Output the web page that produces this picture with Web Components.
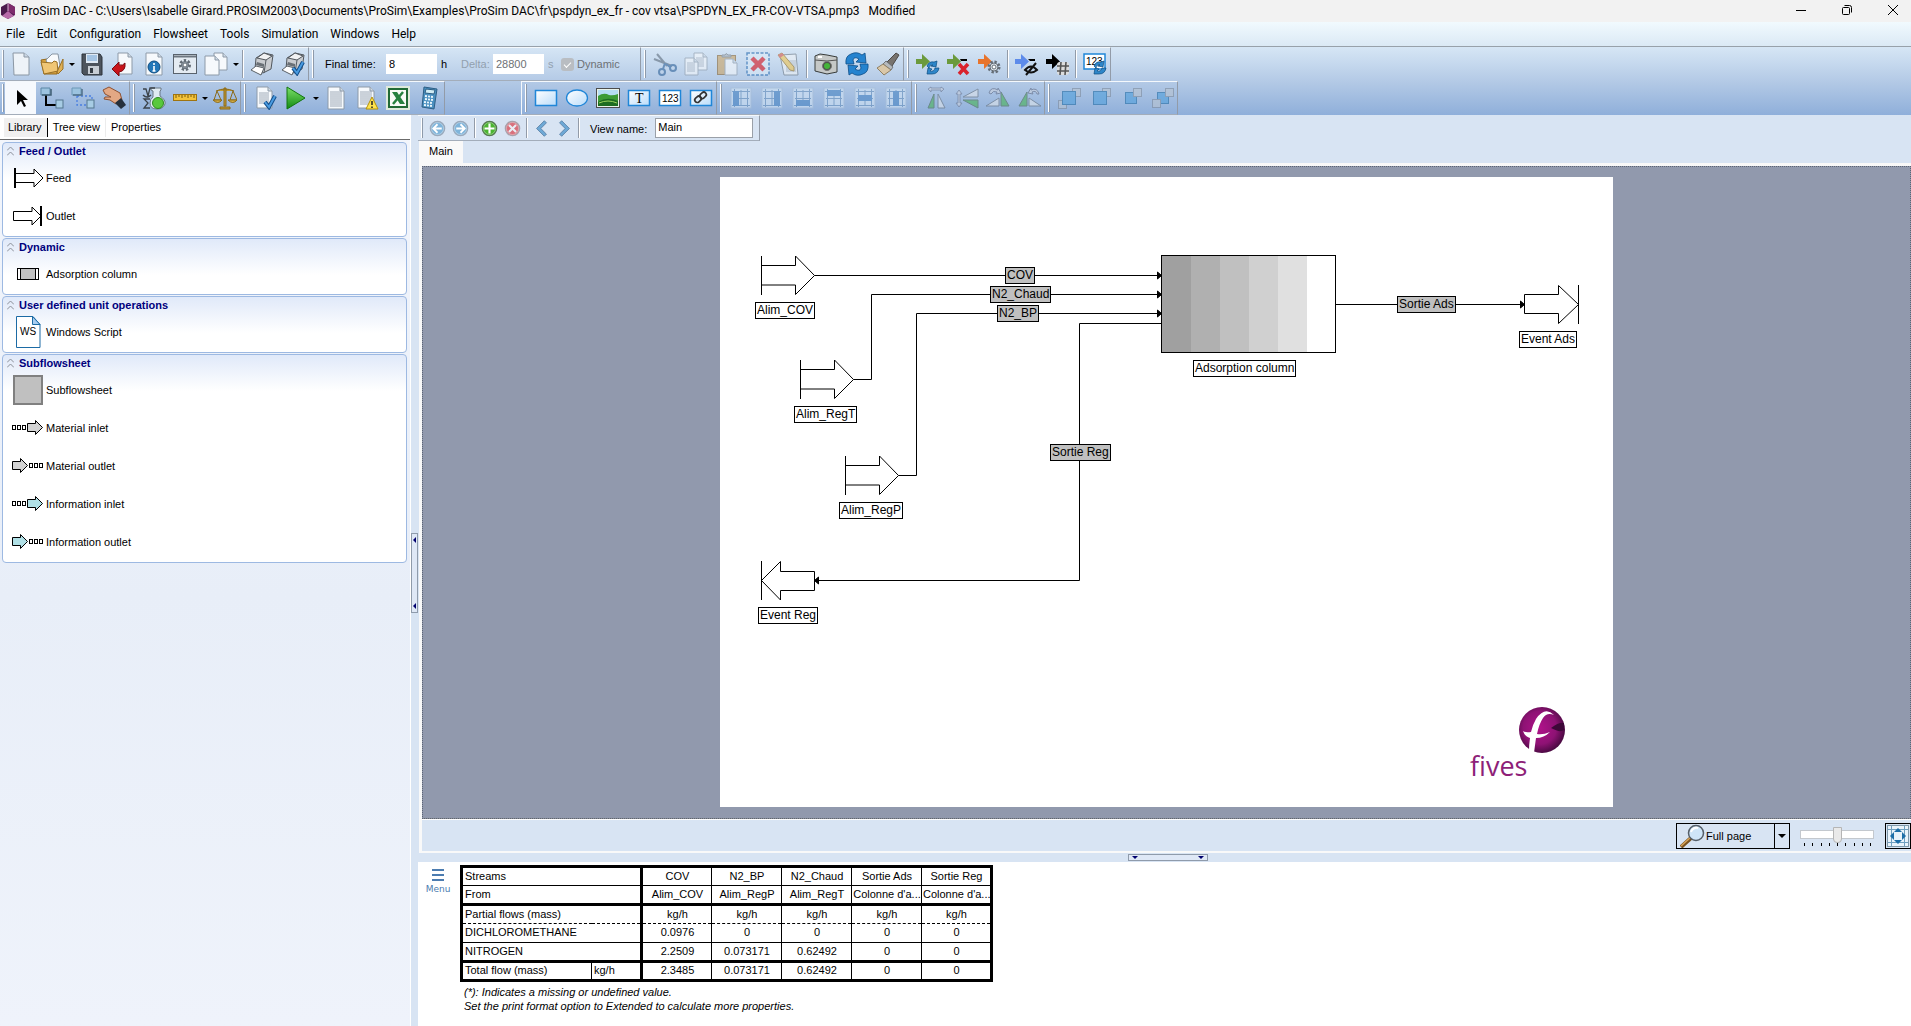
<!DOCTYPE html>
<html lang="en">
<head>
<meta charset="utf-8">
<title>ProSim DAC</title>
<style>
  html, body {
    margin: 0;
    height: 100%;
  }

  body {
    font: 11px/14px "Liberation Sans", Arial, sans-serif;
    color: #000;
    background: #d8e4f3;
    overflow: hidden;
  }
</style>
</head>
<body>
<prosim-app></prosim-app>

<script>
// all toolbar icons, drawn on a 24x24 grid
const page = (x, y, w, h) => `<path d="M${x} ${y}h${w - 4}l4 4v${h - 4}h-${w}z" fill="#f6f9fc" stroke="#8d9aa8"/><path d="M${x + w - 4} ${y}v4h4" fill="#cfdae5" stroke="#8d9aa8"/>`
const lines = (x, y, w, n) => Array.from({length: n}, (_, i) => `<path d="M${x} ${y + i * 2}h${w}" stroke="#8b98a6" stroke-width=".8"/>`).join('')
const tick = `<path d="M12 16l4 5 6-11" fill="none" stroke="#134f8b" stroke-width="4"/><path d="M12 16l4 5 6-11" fill="none" stroke="#4a9be0" stroke-width="2"/>`
const refresh = `<g fill="#2e86c9" stroke="#0c4c80" stroke-width=".7"><path d="M11 14q2-5 7-4l3-1-1 6-5-1 2-1q-3-1-4 3z"/><path d="M23 16q-1 6-7 6h-5l1-6 4 1-2 2q4 1 5-3z"/></g>`
const refreshBig = `<g fill="#2583cf" stroke="#0d4d86" stroke-width=".8"><path d="M1 12Q0 4 6 2q6-3 11 1l3-2 1 10-10-1 3-3q-5-3-6 1l1 4z"/><path d="M23 12q1 8-5 10-6 3-11-1l-3 2-1-10 10 1-3 3q5 3 6-1l-1-4z"/></g>`
const arrow = (c) => `<path d="M0 7h6V2l8 7.500-8 7.500v-5H0z" fill="${c}"/>`
const printer = `<path d="M6 6l8-5 9 2-2 14-8 4-8-4z" fill="#c9ccd0" stroke="#50565c"/><path d="M7 6l9 2 6-4-8-3z" fill="#f1f2f3" stroke="#50565c"/><path d="M16 8l-2 13" stroke="#555b61"/><path d="M7 10l7 2v3l-8-2z" fill="#6a7076"/><path d="M1 18l5-4 8 2-3 7z" fill="#fff" stroke="#5a6066"/>`
const alignIcon = (x, y, w, h) => `<rect x="2" y="2" width="20" height="20" fill="#d5e6f6" stroke="#a9bfd8"/><path d="M3 5.500h18M3 19.500h18M5.500 3v18M18.500 3v18M4 12.500h16M12 4v16" stroke="#6b93bd" fill="none"/><rect x="${x}" y="${y}" width="${w}" height="${h}" fill="#4a86c4"/>`
const square = (x, y, s, c) => `<rect x="${x}" y="${y}" width="${s}" height="${s}" fill="${c}" stroke="${c === '#b8c3d0' ? '#7f8b9b' : '#1f6ba4'}"/>`
const glass = '#b8c3d0', blue = '#4f9fdc'
const disc = (c, edge, inner) => `<circle cx="12" cy="12" r="10" fill="${c}" stroke="${edge}" stroke-width="2"/><circle cx="12" cy="12" r="8.500" fill="none" stroke="#ffffff77"/>${inner}`
const gear = (cx, cy, r, c) => `<circle cx="${cx}" cy="${cy}" r="${r}" fill="none" stroke="#646d76" stroke-width="3" stroke-dasharray="2.200 1.700"/><circle cx="${cx}" cy="${cy}" r="${r - 1}" fill="${c}" stroke="#646d76"/><circle cx="${cx}" cy="${cy}" r="2" fill="#fff" stroke="#646d76"/>`
const frame = `<defs><linearGradient id="f" x2="1" y2="1"><stop stop-color="#fff"/><stop offset="1" stop-color="#b9dcfa"/></linearGradient></defs><rect x="1.500" y="4.500" width="21" height="15" fill="url(#f)" stroke="#1f86d8" stroke-width="1.500"/>`

const icons = {
  new: `<path d="M4 1h11l5 4v18H5z" fill="#eef3f8" stroke="#8b97a4"/><path d="M15 1v4h5" fill="#cbd7e4" stroke="#8b97a4"/>`,
  open: `<path d="M1 8l6-1 1 2h9v13H4z" fill="#d9a441" stroke="#94691c"/><path d="M6 8l6-6h6l2 12-9 7z" fill="#f8fafc" stroke="#8895a3"/><path d="M4 22L1 10l11 1 2-2 3 1 1 9z" fill="#f0c675" stroke="#9a7025"/><path d="M17 20l6-13v10l-5 5z" fill="#e0b055" stroke="#9a7025"/>`,
  save: `<path d="M2 2h18l2 3v18H4l-2-2z" fill="#4d545d" stroke="#2d333a"/><path d="M6 2h12v9H6z" fill="#dfe9f4"/><path d="M7 4h10M7 6h10M7 8h10" stroke="#6ba0d4"/><path d="M8 14h11v8H8z" fill="#c8ced5"/><path d="M10 16h3v5h-3z" fill="#343b43"/>`,
  exit: `${page(7, 1, 14, 21)}<path d="M1 17l7-7v3q4 1 6-2 1 8-6 9v4z" fill="#c8141b" stroke="#7c0a10"/>`,
  info: `${page(4, 1, 16, 22)}<circle cx="12" cy="15" r="6" fill="#2377b8" stroke="#0f4c80"/><path d="M12 11v2M12 14v5M10.500 19h3" stroke="#fff" stroke-width="1.600"/>`,
  options: `<rect x=".5" y="2.500" width="23" height="19" fill="#e4ebf2" stroke="#59626c"/><path d="M1 4.500h22" stroke="#6d7680" stroke-width="2"/>${gear(12, 13, 4.5, '#9da8b4')}`,
  copies: `${page(10, 1, 13, 17)}${page(1, 4, 14, 19)}`,
  print: printer,
  printcheck: `${printer}${tick}`,
  pointer: `<path d="M8 4v15l4-4 3 6 2-1-3-6h5z"/>`,
  link: `<path d="M1 2h9v7H1z" fill="#9cc3df" stroke="#5b86a5"/><path d="M6 9v10h11" fill="none" stroke="#000" stroke-width="2"/><path d="M11 3v6H2" fill="none" stroke="#3f5d73" stroke-width="1.500"/><rect x="16" y="14" width="7" height="8" fill="#a7cce4" stroke="#54778f"/>`,
  linkdot: `<path d="M1 2h9v7H1z" fill="#9cc3df" stroke="#6d98b7"/><path d="M6 10v9h11M6 10h15v4" fill="none" stroke="#4a7fe0" stroke-width="1.300" stroke-dasharray="2 2"/><path d="M11 3v6H2" fill="none" stroke="#4f6f88" stroke-width="1.500"/><rect x="16" y="14" width="7" height="8" fill="#a7cce4" stroke="#54778f"/>`,
  hand: `<path d="M1 4l6-3 11 6 2 7-6 4-6-4-6-1 1-2 6 0-6-3z" fill="#e3a884" stroke="#8e5132"/><path d="M13 17l6-5 5 7-5 4z" fill="#26303c"/>`,
  thermo: `<path d="M9 2h10v2l-1 1v5q6 4 5 8-2 5-8 5-7 0-7-6 0-4 3-6V5L9 4z" fill="#dfeaf2" stroke="#6b7985"/><circle cx="16" cy="17" r="5.500" fill="#59c83d" stroke="#2d8a1e"/><path d="M1 3h3l2 7 2-8h5M1 9q4 4 8 0M8 13H2l4 4-4 5h6" fill="none" stroke="#3b434b" stroke-width="1.300"/>`,
  ruler: `<rect x=".5" y="8.500" width="23" height="6" fill="#f3c33a" stroke="#9f7410"/><path d="M3 9v3M6 9v2M9 9v3M12 9v2M15 9v3M18 9v2M21 9v3" stroke="#7b5a0b"/>`,
  scales: `<path d="M11 2h2v18h-2zM7 21h10v2H7zM3 5q9-4 18 0" fill="#c19a35" stroke="#8b6a19"/><path d="M4 5L1 14h7zM20 5l-3 9h7z" fill="none" stroke="#8b6a19"/><path d="M0 14h9q-4 5-9 0zM15 14h9q-4 5-9 0z" fill="#d6b04b" stroke="#8b6a19"/>`,
  check: `${page(4, 1, 15, 21)}${lines(6, 7, 10, 6)}${tick}`,
  run: `<defs><linearGradient id="g" x2="0" y2="1"><stop stop-color="#7be06a"/><stop offset="1" stop-color="#128a12"/></linearGradient></defs><path d="M3 1l18 11L3 23z" fill="url(#g)" stroke="#12760f"/>`,
  report: `${page(4, 1, 16, 22)}${lines(6, 6, 12, 8)}`,
  warnings: `${page(3, 1, 16, 21)}${lines(5, 6, 12, 7)}<path d="M17 11l6 12H11z" fill="#ffe34d" stroke="#b4920b"/><path d="M17 15v4M17 20.500v1.500" stroke="#222" stroke-width="1.500"/>`,
  excel: `<rect width="24" height="24" fill="#dfe9dc"/><rect x="3" y="3" width="18" height="18" fill="#f8fbf7" stroke="#216a35" stroke-width="2"/><path d="M6 6h5l8 12h-5z" fill="#26803f"/><path d="M17 6L7 18" stroke="#26803f" stroke-width="2.500"/>`,
  calc: `<path d="M7 1l13 2-3 20-12-2z" fill="#4b90c0" stroke="#2c5e85"/><path d="M9 3l9 1-1 4-9-1z" fill="#d1ecf4" stroke="#2c5e85"/><path d="M8 10l8 1M8 13l8 1M7 16l8 1M7 19l8 1" stroke="#eaf5fb" stroke-width="2" stroke-dasharray="2 1"/>`,
  cut: `<path d="M4 2l10 12M1 7l18 7" stroke="#5d6c7c" stroke-width="2"/><circle cx="9" cy="20" r="3" fill="none" stroke="#2f6299" stroke-width="2"/><circle cx="20" cy="16" r="3" fill="none" stroke="#2f6299" stroke-width="2"/><path d="M12 11l-2 6M13 12l4 3" stroke="#2f6299" stroke-width="2"/>`,
  copy: `${page(10, 1, 13, 17)}${lines(12, 6, 8, 5)}${page(1, 6, 13, 17)}${lines(3, 11, 8, 5)}`,
  paste: `<rect x="2.500" y="3.500" width="18" height="19" fill="#c9a365" stroke="#876431"/><path d="M7 5V3h3q1-3 3 0h3v2z" fill="#aab1b8" stroke="#707880"/>${page(10, 7, 12, 16)}`,
  delete: `<rect x="1" y="1" width="22" height="22" fill="#dcebf8" stroke="#1f66ad" stroke-width="1.500" stroke-dasharray="3 1.500"/><path d="M6 6l12 12M18 6L6 18" stroke="#d8121d" stroke-width="4.500"/>`,
  edit: `<path d="M3 3l16-1 2 21H7z" fill="#f0f3f6" stroke="#6d7883"/>${lines(9, 9, 10, 6)}<path d="M1 3l4-2 12 14v4l-4-1z" fill="#f1c550" stroke="#97701d"/><path d="M1 3l4-2 2 2-4 3z" fill="#d6574c"/>`,
  camera: `<path d="M1 4l5-2 7 1 10 2v15l-10 2L1 19z" fill="#c5c8c7" stroke="#383c3b"/><path d="M1 8l12 1 10-1" stroke="#555" fill="none"/><circle cx="13" cy="14" r="4.500" fill="#4a5048" stroke="#777"/><circle cx="13" cy="14" r="3" fill="#45b439"/><path d="M4 4h4v2H4z" fill="#fff"/>`,
  refresh: refreshBig,
  brush: `<path d="M20 1l3 2-7 11-5-4z" fill="#77736f" stroke="#4c4946"/><path d="M10 9l7 6-2 3-8-6z" fill="#b5b9bd" stroke="#70757a"/><path d="M7 12l8 6-7 5-7-7z" fill="#d9c7a8" stroke="#8f8064"/>`,
  streamrefresh: `${arrow('#6b9a3c')}${refresh}`,
  streamdelete: `${arrow('#6b9a3c')}<path d="M13 7h7v2h-6z"/><path d="M12 12l9 10M21 12l-9 10" stroke="#d9222d" stroke-width="3.500"/>`,
  streamgear: `${arrow('#e8742c')}${gear(16, 15, 5, '#dfe5ea')}`,
  streamhide: `${arrow('#5d8bea')}<path d="M13 7h7v2h-5z"/><path d="M10 18q6-7 12 0-6 5-12 0zM21 11L11 23" fill="none" stroke="#111" stroke-width="2"/>`,
  streamnumber: `${arrow('#000')}<rect x="11" y="10" width="12" height="13" fill="#ddd" rx="3"/><path d="M15 10l-1 13M20 10l-1 13M11 14h12M11 19h12" stroke="#555" stroke-width="1.600"/>`,
  values: `<rect x="1" y="2" width="21" height="15" fill="#fff" stroke="#1f86d8" stroke-width="1.500"/><text x="3" y="13" font-size="10">123</text>${refresh}`,
  rect: frame,
  ellipse: `<defs><linearGradient id="e" x2="1" y2="1"><stop stop-color="#fff"/><stop offset="1" stop-color="#b9dcfa"/></linearGradient></defs><ellipse cx="12" cy="12" rx="10.500" ry="8" fill="url(#e)" stroke="#1f86d8" stroke-width="1.300"/>`,
  image: `<rect x=".5" y="2.500" width="23" height="19" fill="#e9f3ea" stroke="#4d4d4d"/><path d="M2 4h20v7H2z" fill="#b5ddf3"/><path d="M2 10q6-4 11-1 4 1 9-1v12H2z" fill="#3c9b35"/><path d="M2 16q9-6 20-1v5H2z" fill="#1d6d22"/><path d="M3 17q9-4 18 0" stroke="#9ad35d" fill="none"/>`,
  text: `${frame}<text x="8" y="17" font-size="14" font-family="Liberation Serif">T</text>`,
  number: `<rect x="1.500" y="4.500" width="21" height="15" fill="#fff" stroke="#1f86d8" stroke-width="1.500"/><text x="4" y="16" font-size="10">123</text>`,
  hyperlink: `${frame}<g fill="none" stroke="#333" stroke-width="1.700"><rect x="6" y="11" width="7" height="5" rx="2.500" transform="rotate(-42 9 14)"/><rect x="11" y="7" width="7" height="5" rx="2.500" transform="rotate(-42 14 10)"/></g>`,
  alignleft: alignIcon(4, 5, 6, 15),
  alignright: alignIcon(14, 5, 6, 15),
  alignbottom: alignIcon(5, 14, 14, 6),
  aligntop: alignIcon(5, 4, 14, 6),
  alignmiddle: alignIcon(5, 9, 14, 6),
  aligncenter: alignIcon(9, 5, 6, 15),
  fliph: `<path d="M10 8v14H4z" fill="#48b356" stroke="#4c6b55"/><path d="M14 8v14h7z" fill="#dfe5eb" stroke="#66727f"/><path d="M4 3l3-2v1h10V1l3 2-3 3V4H7v2z" fill="#c9d0dd" stroke="#5f6a84" stroke-width=".8"/>`,
  flipv: `<path d="M8 11l15-8v8z" fill="#dfe5eb" stroke="#66727f"/><path d="M8 14h15v8z" fill="#48b356" stroke="#4c6b55"/><path d="M4 4l3 4H5v9h2l-3 4-3-4h2V8H1z" fill="#c9d0dd" stroke="#5f6a84" stroke-width=".8"/>`,
  rotateleft: `<path d="M0 20l13-8v8z" fill="#dfe5eb" stroke="#66727f"/><path d="M15 6v14h8z" fill="#48b356" stroke="#4c6b55"/><path d="M3 7q2-7 9-3V2l3 5-5 1 1-2q-4-2-6 2z" fill="#c9d0dd" stroke="#5f6a84"/>`,
  rotateright: `<path d="M10 6v14H2z" fill="#48b356" stroke="#4c6b55"/><path d="M12 12v8h12z" fill="#dfe5eb" stroke="#66727f"/><path d="M22 8q-2-7-8-4V2l-3 5 5 1-1-2q4-2 5 2z" fill="#c9d0dd" stroke="#5f6a84"/>`,
  tofront: `${square(15.5, 2.5, 8, glass)}${square(1.5, 14.5, 8, glass)}${square(5.5, 5.5, 13, blue)}`,
  forward: `${square(14.5, 2.5, 8, glass)}${square(5.5, 5.5, 13, blue)}`,
  backward: `${square(6.5, 6.5, 11, blue)}${square(14.5, 2.5, 8, glass)}`,
  toback: `${square(7.5, 6.5, 11, blue)}${square(15.5, 2.5, 8, glass)}${square(2.5, 13.5, 8, glass)}`,
  back: disc('#7fb4da', '#9aa9bb', '<path d="M18 12H7M12 6l-6 6 6 6" fill="none" stroke="#fff" stroke-width="2.500"/>'),
  next: disc('#7fb4da', '#9aa9bb', '<path d="M6 12h11M12 6l6 6-6 6" fill="none" stroke="#fff" stroke-width="2.500"/>'),
  add: disc('#4cb531', '#557a50', '<path d="M12 5v14M5 12h14" stroke="#fff" stroke-width="3"/>'),
  remove: disc('#d8707c', '#a9a2ac', '<path d="M7 7l10 10M17 7L7 17" stroke="#e9edf4" stroke-width="3"/>'),
  prev: `<path d="M16 1l3 3-8 8 8 8-3 3L5 12z" fill="#6ea9d6" stroke="#4a7299"/>`,
  following: `<path d="M8 1L5 4l8 8-8 8 3 3 11-11z" fill="#6ea9d6" stroke="#4a7299"/>`
}

class ToolButton extends HTMLElement {
  constructor() {
    super();
    this.shadow = this.attachShadow({mode: 'open'});
  }

  connectedCallback() {
    const name = this.getAttribute('icon');
    this.shadow.innerHTML = `
    <style>
      :host {
        display: flex;
      }

      button {
        width: var(--button, 31px);
        padding: 0;
        border: none;
        background: none;
        display: flex;
        align-items: center;
        justify-content: center;
        font: inherit;
      }

      button.drop {
        width: 9px;
      }

      .drop i {
        border: 3px solid transparent;
        border-top: 3px solid #000;
        border-bottom: none;
      }

      :host([pressed]) button {
        background: #f6f9fd;
      }

      :host([dim]) button {
        opacity: .6;
      }

      svg {
        width: var(--icon, 24px);
        height: var(--icon, 24px);
      }
    </style>
    <button aria-label="${name}"><svg viewBox="0 0 24 24">${icons[name]}</svg></button>
    ${this.hasAttribute('menu') ? `<button class="drop" aria-label="${name} menu"><i></i></button>` : ''}
    `;
  }
}

class ToolBand extends HTMLElement {
  constructor() {
    super();
    this.shadow = this.attachShadow({mode: 'open'});
    this.shadow.innerHTML = `
    <style>
      :host {
        display: flex;
        box-sizing: border-box;
        border-top: 1px solid #f4f8fc;
        border-right: 1px solid #929ba8;
        border-bottom: 1px solid #a3adba;
      }

      .grip {
        box-sizing: border-box;
        width: 2px;
        margin: 2px 3px;
        background: #fff;
        border-right: 1px solid #8e9aaa;
      }

      :host([first]) .grip {
        margin: 2px 1px 2px 2px;
      }

      ::slotted(hr) {
        width: 1px;
        margin: 2px;
        border: none;
        border-left: 1px solid #929ba8;
        background: #fff;
      }
    </style>
    <div class="grip"></div>
    <slot></slot>
    `;
  }
}

class TitleBar extends HTMLElement {
  constructor() {
    super();
    this.shadow = this.attachShadow({mode: 'open'});
    this.shadow.innerHTML = `
    <style>
      :host {
        display: flex;
        align-items: center;
        height: 22px;
        background: #f2f2f2;
        font: 12px/20px Roboto, "Open Sans", sans-serif;
      }

      .logo {
        width: 16px;
        height: 18px;
        margin-right: 5px;
      }

      p {
        flex: 1;
        margin: 0;
        white-space: pre;
      }

      .buttons {
        display: flex;
        gap: 10px;
      }

      button {
        width: 36px;
        height: 20px;
        padding: 0;
        border: none;
        background: none;
      }

      button svg {
        width: 12px;
        height: 12px;
        fill: none;
        stroke: #000;
      }
    </style>
    <svg class="logo" viewBox="0 0 16 18">
      <path d="M8 1l7 4v8l-7 4-7-4V5z" fill="#4b1a4b"/>
      <path d="M8 1l7 4v8l-7-4z" fill="#7d2b6b"/>
      <path d="M8 9l6 5-6 3-6-3z" fill="#b86aa8"/>
      <path d="M8 1v8" stroke="#d9b5d3"/>
    </svg>
    <p><slot></slot></p>
    <div class="buttons">
      <button aria-label="Minimize"><svg viewBox="0 0 12 12"><path d="M1 6.500h10"/></svg></button>
      <button aria-label="Restore"><svg viewBox="0 0 12 12"><rect x="1.500" y="3.500" width="7" height="7" rx="1"/><path d="M3.500 1.500h5q2 0 2 2v5"/></svg></button>
      <button aria-label="Close"><svg viewBox="0 0 12 12"><path d="M1 1l10 10M11 1L1 11"/></svg></button>
    </div>
    `;
  }
}

class MenuBar extends HTMLElement {
  constructor() {
    super();
    this.shadow = this.attachShadow({mode: 'open'});
    const items = ['File', 'Edit', 'Configuration', 'Flowsheet', 'Tools', 'Simulation', 'Windows', 'Help'];
    this.shadow.innerHTML = `
    <style>
      :host {
        display: flex;
        gap: 12px;
        height: 24px;
        padding-left: 6px;
        background: linear-gradient(#f1fafe, #dbe9f5);
        border-bottom: 1px solid #98a1aa;
      }

      button {
        padding: 0;
        border: none;
        background: none;
        font: 12px/20px Roboto, "Open Sans", sans-serif;
      }
    </style>
    ${items.map(item => `<button>${item}</button>`).join('')}
    `;
  }
}

// "a:menu b | c" -> buttons and separators
const tools = (list) => list.split(' ').map(item => {
  if (item === '|') return '<hr>';
  const [name, ...flags] = item.split(':');
  return `<tool-button icon="${name}" ${flags.join(' ')}></tool-button>`;
}).join('')

class MainTools extends HTMLElement {
  constructor() {
    super();
    this.shadow = this.attachShadow({mode: 'open'});
    this.shadow.innerHTML = `
    <style>
      :host {
        display: block;
        background: linear-gradient(#d6e6f5, #b4cae6 50%, #8fafda);
      }

      .row {
        display: flex;
        height: 34px;
      }

      .time {
        display: flex;
        align-items: center;
        width: 315px;
        padding-left: 8px;
      }

      .time label:first-child {
        width: 61px;
      }

      .time .off {
        color: #92a0ae;
      }

      .time .value {
        box-sizing: border-box;
        width: 51px;
        height: 20px;
        padding: 0 3px;
        border: none;
        background: #fff;
        font: inherit;
        margin-right: 4px;
      }

      .value:disabled {
        color: #6d7175;
      }

      .unit {
        width: 20px;
      }

      .time .delta {
        width: 32px;
      }

      .short {
        width: 13px;
      }

      .tickbox {
        appearance: none;
        display: grid;
        place-items: center;
        width: 13px;
        height: 13px;
        margin: 0 3px 0 0;
        border-radius: 3px;
        background: #b9bdc2;
      }

      .tickbox::after {
        content: "";
        width: 6px;
        height: 3px;
        border-left: 1px solid #fff;
        border-bottom: 1px solid #fff;
        transform: rotate(-45deg);
      }

      .tick-label {
        color: #6d7175;
      }

      .shapes {
        margin-left: 76px;
        border-left: 1px solid #f4f8fc;
      }
    </style>
    <div class="row">
      <tool-band first>${tools('new open:menu save exit info options copies:menu | print printcheck')}</tool-band>
      <tool-band>
        <div class="time">
          <label for="final">Final time:</label>
          <input class="value" id="final" value="8">
          <span class="unit">h</span>
          <label class="off delta" for="delta">Delta:</label>
          <input class="value" id="delta" value="28800" disabled>
          <span class="off short">s</span>
          <input class="tickbox" type="checkbox" id="dynamic" checked disabled>
          <label class="tick-label" for="dynamic">Dynamic</label>
        </div>
      </tool-band>
      <tool-band>${tools('cut:dim copy:dim paste:dim delete:dim edit:dim | camera refresh brush')}</tool-band>
      <tool-band>${tools('streamrefresh streamdelete streamgear | streamhide streamnumber | values')}</tool-band>
    </div>
    <div class="row">
      <tool-band first>${tools('pointer:pressed link linkdot hand')}</tool-band>
      <tool-band>${tools('thermo ruler:menu scales')}</tool-band>
      <tool-band>${tools('check run:menu report warnings excel calc')}</tool-band>
      <tool-band class="shapes">${tools('rect ellipse image text number hyperlink')}</tool-band>
      <tool-band>${tools('alignleft:dim alignright:dim alignbottom:dim aligntop:dim alignmiddle:dim aligncenter:dim')}</tool-band>
      <tool-band>${tools('fliph:dim flipv:dim rotateleft:dim rotateright:dim')}</tool-band>
      <tool-band>${tools('tofront:dim forward:dim backward:dim toback:dim')}</tool-band>
    </div>
    `;
  }
}

// library symbols, 36x38
const ports = (x) => [0, 5, 10].map(d => `<rect x="${x + d}" y="16.500" width="3" height="4" fill="#fff" stroke="#000"/>`).join('')
const smallArrow = (x, c) => `<path d="M${x} 14.500h8v-3l7 7-7 7v-3h-8z" fill="${c}" stroke="#000"/>`
const symbols = {
  feed: `<path d="M5 14.500H24V10l9 9-9 9v-4.500H5" fill="#fff" stroke="#000"/><path d="M5 9v20" stroke="#000" stroke-width="2"/>`,
  outlet: `<path d="M3.500 14.500H22V10l9 9-9 9v-4.500H3.500z" fill="#fff" stroke="#000"/><path d="M31 9v20" stroke="#000" stroke-width="2"/>`,
  column: `<rect x="7.500" y="13.500" width="21" height="11" fill="#fff" stroke="#000"/><rect x="10.500" y="13.500" width="15" height="11" fill="#c0c0c0" stroke="#000"/>`,
  script: `<path d="M6.500 3.500H23l7 8v23H6.500z" fill="#fff" stroke="#1c6ba5"/><path d="M22.500 3.500v8H30z" fill="#a9cdf0" stroke="#1c6ba5"/><text x="10" y="22" font-size="10">WS</text>`,
  sub: `<rect x="4" y="5" width="28" height="28" fill="#c0c0c0" stroke="#808080" stroke-width="2"/>`,
  matin: `${ports(2.5)}${smallArrow(17.5, '#d3d3d3')}`,
  matout: `${smallArrow(2.5, '#d3d3d3')}${ports(19.5)}`,
  infin: `${ports(2.5)}${smallArrow(17.5, '#b0e0e6')}`,
  infout: `${smallArrow(2.5, '#b0e0e6')}${ports(19.5)}`
}

class LibraryItem extends HTMLElement {
  constructor() {
    super();
    this.shadow = this.attachShadow({mode: 'open'});
  }

  connectedCallback() {
    this.shadow.innerHTML = `
    <style>
      :host {
        display: flex;
        align-items: center;
        height: 38px;
        padding-left: 7px;
      }

      svg {
        width: 36px;
        height: 38px;
      }
    </style>
    <svg viewBox="0 0 36 38">${symbols[this.getAttribute('symbol')]}</svg>
    <span><slot></slot></span>
    `;
  }
}

class LibraryGroup extends HTMLElement {
  constructor() {
    super();
    this.shadow = this.attachShadow({mode: 'open'});
  }

  connectedCallback() {
    this.shadow.innerHTML = `
    <style>
      :host {
        display: block;
        padding-bottom: 1px;
        border: 1px solid #9db9e2;
        border-radius: 4px;
        background: linear-gradient(#e0e9f9, #fff 36px);
      }

      button {
        display: flex;
        align-items: center;
        gap: 5px;
        height: 16px;
        padding: 0 4px;
        border: none;
        background: none;
        font: bold 11px/14px "Liberation Sans", Arial, sans-serif;
        color: #00007d;
      }

      svg {
        width: 7px;
        height: 10px;
        fill: none;
        stroke: #8a8f98;
      }

      :host([closed]) slot {
        display: none;
      }
    </style>
    <button><svg viewBox="0 0 7 10"><path d="M0 4.500L3.500 1 7 4.500M0 9.500L3.500 6 7 9.500"/></svg>${this.getAttribute('heading')}</button>
    <slot></slot>
    `;
    this.shadow.querySelector('button').addEventListener('click', () => this.toggleAttribute('closed'));
  }
}

class LibraryPanel extends HTMLElement {
  constructor() {
    super();
    this.shadow = this.attachShadow({mode: 'open'});
    this.shadow.innerHTML = `
    <style>
      :host {
        display: flex;
        flex-direction: column;
        box-sizing: border-box;
        border-right: 1px solid #fff;
        background: linear-gradient(#f3f6fc, #e8eef8 480px, #eff3fb);
      }

      nav {
        display: flex;
        gap: 1px;
        height: 24px;
        padding-left: 4px;
        background: #fff;
        border-bottom: 1px solid #6b6b6b;
        align-items: center;
      }

      nav button {
        height: 19px;
        padding: 0 5px 0 4px;
        border: none;
        border-right: 1px solid #ececec;
        background: none;
        font: inherit;
      }

      nav .active {
        background: #f0f0f0;
        border-right-color: #000;
      }

      nav button:last-child {
        border: none;
      }

      .groups {
        display: flex;
        flex-direction: column;
        gap: 1px;
        padding: 2px 3px 0 2px;
      }
    </style>
    <nav>
      <button class="active">Library</button>
      <button>Tree view</button>
      <button>Properties</button>
    </nav>
    <div class="groups">
      <library-group heading="Feed / Outlet">
        <library-item symbol="feed">Feed</library-item>
        <library-item symbol="outlet">Outlet</library-item>
      </library-group>
      <library-group heading="Dynamic">
        <library-item symbol="column">Adsorption column</library-item>
      </library-group>
      <library-group heading="User defined unit operations">
        <library-item symbol="script">Windows Script</library-item>
      </library-group>
      <library-group heading="Subflowsheet">
        <library-item symbol="sub">Subflowsheet</library-item>
        <library-item symbol="matin">Material inlet</library-item>
        <library-item symbol="matout">Material outlet</library-item>
        <library-item symbol="infin">Information inlet</library-item>
        <library-item symbol="infout">Information outlet</library-item>
      </library-group>
    </div>
    `;
  }
}

class SplitHandle extends HTMLElement {
  constructor() {
    super();
    this.shadow = this.attachShadow({mode: 'open'});
    this.shadow.innerHTML = `
    <style>
      :host {
        display: flex;
        align-items: center;
        justify-content: center;
        padding-top: 4px;
      }

      button {
        display: flex;
        flex-direction: column;
        justify-content: space-between;
        align-items: center;
        box-sizing: border-box;
        width: 7px;
        height: 80px;
        padding: 3px 0;
        border: 1px solid #8f9bab;
        background: #dfe8f6;
      }

      i {
        border: 3px solid transparent;
        border-right-color: #00006e;
        border-left: none;
      }

      :host([flat]) {
        padding: 0 0 0 6px;
      }

      :host([flat]) button {
        flex-direction: row;
        width: 80px;
        height: 7px;
        padding: 0 3px;
      }

      :host([flat]) i {
        border: 3px solid transparent;
        border-top-color: #00006e;
        border-bottom: none;
      }
    </style>
    <button aria-label="Collapse"><i></i><i></i></button>
    `;
  }
}

class ViewBar extends HTMLElement {
  constructor() {
    super();
    this.shadow = this.attachShadow({mode: 'open'});
    this.shadow.innerHTML = `
    <style>
      :host {
        display: flex;
        height: 26px;
        --button: 23px;
        --icon: 17px;
      }

      label {
        align-self: center;
        padding: 2px 8px 0 8px;
      }

      input {
        box-sizing: border-box;
        align-self: center;
        width: 98px;
        height: 20px;
        margin-right: 6px;
        padding: 0 2px 2px;
        border: 1px solid #9aa0a8;
        font: inherit;
      }
    </style>
    <tool-band>
      ${tools('back next | add remove | prev following |')}
      <label for="view">View name:</label>
      <input id="view" value="Main">
    </tool-band>
    `;
  }
}

class FlowLabel extends HTMLElement {
  constructor() {
    super();
    this.shadow = this.attachShadow({mode: 'open'});
    this.shadow.innerHTML = `
    <style>
      :host {
        position: absolute;
        display: block;
        padding: 0 1px;
        border: 1px solid #000;
        background: #fff;
        font-size: 12px;
        line-height: 15px;
        white-space: nowrap;
      }

      :host([stream]) {
        background: #c0c0c0;
      }
    </style>
    <slot></slot>
    `;
  }
}

class FlowSheet extends HTMLElement {
  labels = [
    ['Alim_COV', 35, 125], ['Alim_RegT', 74, 229], ['Alim_RegP', 119, 325],
    ['Event Reg', 38, 430], ['Event Ads', 799, 154], ['Adsorption column', 473, 183],
    ['COV', 285, 90, 'stream'], ['N2_Chaud', 270, 109, 'stream'], ['N2_BP', 277, 128, 'stream'],
    ['Sortie Reg', 330, 267, 'stream'], ['Sortie Ads', 677, 119, 'stream']
  ]

  constructor() {
    super();
    this.shadow = this.attachShadow({mode: 'open'});
    const shades = ['#a0a0a0', '#b0b0b0', '#c0c0c0', '#d0d0d0', '#e0e0e0', '#fff'];
    const feed = (x, y) => `<path d="M${x} ${y - 19.5}v39M${x} ${y - 10}h34v-9.500l19 19.500-19 19v-9.500h-34"/>`;
    const head = (x, y) => `<path d="M${x} ${y}l-4-3.500v7z" fill="#000"/>`;

    this.shadow.innerHTML = `
    <style>
      :host {
        display: flex;
        align-items: center;
        justify-content: center;
        background: #9199ad;
        overflow: hidden;
        outline: 1px dotted #5c6475;
        outline-offset: -1px;
      }

      .paper {
        position: relative;
        flex: none;
        width: 893px;
        height: 630px;
        background: #fff;
      }

      svg {
        display: block;
      }
    </style>
    <div class="paper">
      <svg width="893" height="630" viewBox="0 0 893 630" fill="none" stroke="#000">
        <defs>
          <radialGradient id="ball" cx=".45" cy=".45" r=".6">
            <stop stop-color="#b0128a"/>
            <stop offset=".6" stop-color="#8e1274"/>
            <stop offset="1" stop-color="#3d0838"/>
          </radialGradient>
        </defs>
        ${feed(41.5, 98.5)}
        ${feed(80.5, 202.5)}
        ${feed(125.5, 298.5)}
        <path d="M94.500 98.500h347M133.500 202.500h18v-85h290M178.500 298.500h18v-162h245"/>
        <path d="M441.500 146.500h-82v257h-265M615.500 127.500h189"/>
        ${shades.map((c, i) => `<rect x="${441.5 + i * 29}" y="78.500" width="29" height="97" fill="${c}" stroke="none" shape-rendering="crispEdges"/>`).join('')}
        <rect x="441.500" y="78.500" width="174" height="97"/>
        ${head(441.5, 98.5)}${head(441.5, 117.5)}${head(441.5, 136.5)}${head(804.5, 127.5)}
        <path d="M94.500 403.500l4-3.500v7z" fill="#000"/>
        <path d="M41.500 384v39M41.500 403.500l19-19v10h34v19h-34v9.500z"/>
        <path d="M858.500 108v39M858.500 127.500l-20-19v9h-34v19h34v10z"/>
        <g stroke="none">
          <circle cx="822" cy="553" r="23" fill="url(#ball)"/>
          <path d="M831 551q8-6 13-5v7q-4 3-13-2z" fill="#3d0838"/>
          <path d="M834 538q-9-9-18 4-3 5-5 13-5 1-8-1 2 6 7 7-1 7-1 12l5 3q1-8 2-15 8 0 14-6-7 3-13 2 2-10 6-16 4-6 11-3z" fill="#fff"/>
        </g>
        <text x="750" y="599" fill="#8e1f78" stroke="none" font-family="Open Sans, Noto Sans, sans-serif" font-size="27" font-weight="500">fives</text>
      </svg>
      ${this.labels.map(([text, x, y, kind]) => `<flow-label ${kind || ''} style="left: ${x}px; top: ${y}px">${text}</flow-label>`).join('')}
    </div>
    `;
  }
}

class ZoomBar extends HTMLElement {
  constructor() {
    super();
    this.shadow = this.attachShadow({mode: 'open'});
    const marks = Array.from({length: 9}, () => '<i></i>').join('');
    this.shadow.innerHTML = `
    <style>
      :host {
        display: flex;
        justify-content: flex-end;
        align-items: center;
        height: 31px;
      }

      button {
        box-sizing: border-box;
        height: 26px;
        padding: 0;
        border: 1px solid #000;
        background: #d8e4f3;
        font: inherit;
      }

      .zoom {
        display: flex;
        align-items: center;
        width: 99px;
        padding-left: 3px;
      }

      .zoom svg {
        width: 26px;
        height: 24px;
      }

      .arrow {
        display: grid;
        place-items: center;
        width: 15px;
        border-left: none;
      }

      .arrow i {
        border: 4px solid transparent;
        border-top-color: #000;
        border-bottom: none;
      }

      .slider {
        display: flex;
        flex-direction: column;
        width: 74px;
        margin: 0 11px 0 10px;
      }

      input {
        appearance: none;
        width: 74px;
        height: 18px;
        margin: 0;
        background: none;
      }

      input::-webkit-slider-runnable-track {
        box-sizing: border-box;
        height: 9px;
        border: 1px solid #c3c8ce;
        background: #fff;
      }

      input::-webkit-slider-thumb {
        appearance: none;
        width: 9px;
        height: 16px;
        margin-top: -4px;
        background: #e9e9e9;
        border: 1px solid #b5b5b5;
        border-radius: 0 0 4px 4px;
      }

      .marks {
        display: flex;
        justify-content: space-between;
        padding: 0 3px 0 4px;
      }

      .marks i {
        width: 1px;
        height: 3px;
        background: #000;
      }

      .fit {
        width: 26px;
      }

      .fit svg {
        display: block;
        width: 24px;
        height: 24px;
      }
    </style>
    <button class="zoom">
      <svg viewBox="0 0 26 24"><path d="M1 23l10-9" stroke="#7c5420" stroke-width="4"/><path d="M1 22l10-9" stroke="#d9a55a" stroke-width="1.500"/><circle cx="16" cy="9" r="7.500" fill="#cfe5f8" stroke="#555e68" stroke-width="1.500"/><path d="M11 8q2-5 7-4" fill="none" stroke="#fff" stroke-width="2"/></svg>
      Full page
    </button>
    <button class="arrow" aria-label="Zoom levels"><i></i></button>
    <div class="slider">
      <input type="range" min="0" max="8" value="4" aria-label="Zoom">
      <div class="marks">${marks}</div>
    </div>
    <button class="fit" aria-label="Fit">
      <svg viewBox="0 0 24 24"><rect x="1.500" y="1.500" width="21" height="21" fill="#e9f3fb" stroke="#7f99ab"/><path d="M2 5.500h20M2 18.500h20M5.500 2v20M18.500 2v20" stroke="#6f9fc0"/><path d="M12 4l4 4H8zM12 20l4-4H8zM4 12l4-4v8zM20 12l-4-4v8z" fill="#1d6ea8"/></svg>
    </button>
    `;
  }
}

class StreamTable extends HTMLElement {
  rows = [
    ['Streams', 'COV', 'N2_BP', 'N2_Chaud', 'Sortie Ads', 'Sortie Reg'],
    ['From', 'Alim_COV', 'Alim_RegP', 'Alim_RegT', "Colonne d'a...", "Colonne d'a..."],
    ['Partial flows (mass)', 'kg/h', 'kg/h', 'kg/h', 'kg/h', 'kg/h'],
    ['DICHLOROMETHANE', '0.0976', '0', '0', '0', '0'],
    ['NITROGEN', '2.2509', '0.073171', '0.62492', '0', '0'],
    ['Total flow (mass)', '2.3485', '0.073171', '0.62492', '0', '0']
  ]

  constructor() {
    super();
    this.shadow = this.attachShadow({mode: 'open'});
    const last = this.rows.length - 1;
    this.shadow.innerHTML = `
    <style>
      :host {
        display: flex;
        align-items: flex-start;
        gap: 8px;
        padding: 3px 0 13px 6px;
        background: #fff;
      }

      .menu {
        display: flex;
        flex-direction: column;
        align-items: center;
        width: 28px;
        margin-top: 3px;
        padding: 0;
        border: none;
        background: none;
        font: 9px/14px "DejaVu Sans", sans-serif;
        color: #4c7cb0;
      }

      .menu svg {
        width: 14px;
        height: 14px;
      }

      table {
        width: 533px;
        table-layout: fixed;
        border-collapse: collapse;
        border: 3px solid #000;
      }

      td, th {
        box-sizing: border-box;
        height: 19px;
        padding: 0 0 2px;
        border: 1px solid #000;
        font-weight: normal;
        line-height: 14px;
        text-align: center;
        white-space: nowrap;
        overflow: hidden;
      }

      td {
        padding-left: 1px;
      }

      th {
        padding-left: 2px;
        text-align: left;
      }

      th:first-child + td, th + th + td {
        border-left: 3px solid #000;
      }

      tr:nth-child(3), tr:last-child {
        border-top: 3px solid #000;
      }

      tr:nth-child(3) > * {
        border-bottom: 1px dashed #000;
      }

      tr:nth-child(4) > * {
        border-top: 1px dashed #000;
      }

      p {
        margin: 0 0 0 4px;
        font-style: italic;
      }

      .notes {
        padding-top: 3px;
      }
    </style>
    <button class="menu">
      <svg viewBox="0 0 14 14"><path d="M1 2h12M1 7h12M1 12h12" stroke="#4c7cb0" stroke-width="2"/></svg>
      Menu
    </button>
    <div>
      <table>
        <colgroup><col style="width: 130px"><col style="width: 50px"><col><col><col><col><col></colgroup>
        <tbody>
        ${this.rows.map(([head, ...cells], i) => `<tr>
          ${i === last ? `<th scope="row">${head}</th><th>kg/h</th>` : `<th scope="row" colspan="2">${head}</th>`}
          ${cells.map(cell => `<td>${cell}</td>`).join('')}
        </tr>`).join('')}
        </tbody>
      </table>
      <div class="notes">
        <p>(*): Indicates a missing or undefined value.</p>
        <p>Set the print format option to Extended to calculate more properties.</p>
      </div>
    </div>
    `;
  }
}

class ProsimApp extends HTMLElement {
  constructor() {
    super();
    this.shadow = this.attachShadow({mode: 'open'});
    this.shadow.innerHTML = `
    <style>
      :host {
        display: flex;
        flex-direction: column;
        height: 100vh;
      }

      .work {
        flex: 1;
        min-height: 0;
        display: grid;
        grid-template-columns: 411px 7px 1fr;
      }

      .main {
        display: flex;
        flex-direction: column;
        min-width: 0;
        min-height: 0;
      }

      .tabs {
        display: flex;
        height: 22px;
        padding-left: 1px;
      }

      .tabs button {
        width: 44px;
        padding: 0 0 2px;
        border: none;
        background: #f9f9f9;
        font: inherit;
      }

      .view {
        flex: 1;
        min-height: 0;
        display: flex;
        flex-direction: column;
        border: solid #f9f9f9;
        border-width: 3px 0 2px 3px;
        margin-left: 1px;
      }

      flow-sheet {
        flex: 1;
        min-height: 0;
        border-bottom: 1px solid #8b8f94;
      }

      zoom-bar {
        border-top: 1px solid #fff;
      }

      .main split-handle {
        height: 9px;
      }
    </style>
    <title-bar>ProSim DAC - C:\\Users\\Isabelle Girard.PROSIM2003\\Documents\\ProSim\\Examples\\ProSim DAC\\fr\\pspdyn_ex_fr - cov vtsa\\PSPDYN_EX_FR-COV-VTSA.pmp3   Modified</title-bar>
    <menu-bar></menu-bar>
    <main-tools></main-tools>
    <div class="work">
      <library-panel></library-panel>
      <split-handle></split-handle>
      <div class="main">
        <view-bar></view-bar>
        <div class="tabs"><button>Main</button></div>
        <div class="view">
          <flow-sheet></flow-sheet>
          <zoom-bar></zoom-bar>
        </div>
        <split-handle flat></split-handle>
        <stream-table></stream-table>
      </div>
    </div>
    `;
  }
}

customElements.define('tool-button', ToolButton);
customElements.define('tool-band', ToolBand);
customElements.define('title-bar', TitleBar);
customElements.define('menu-bar', MenuBar);
customElements.define('main-tools', MainTools);
customElements.define('library-item', LibraryItem);
customElements.define('library-group', LibraryGroup);
customElements.define('library-panel', LibraryPanel);
customElements.define('split-handle', SplitHandle);
customElements.define('view-bar', ViewBar);
customElements.define('flow-label', FlowLabel);
customElements.define('flow-sheet', FlowSheet);
customElements.define('zoom-bar', ZoomBar);
customElements.define('stream-table', StreamTable);
customElements.define('prosim-app', ProsimApp);
</script>
</body>
</html>
